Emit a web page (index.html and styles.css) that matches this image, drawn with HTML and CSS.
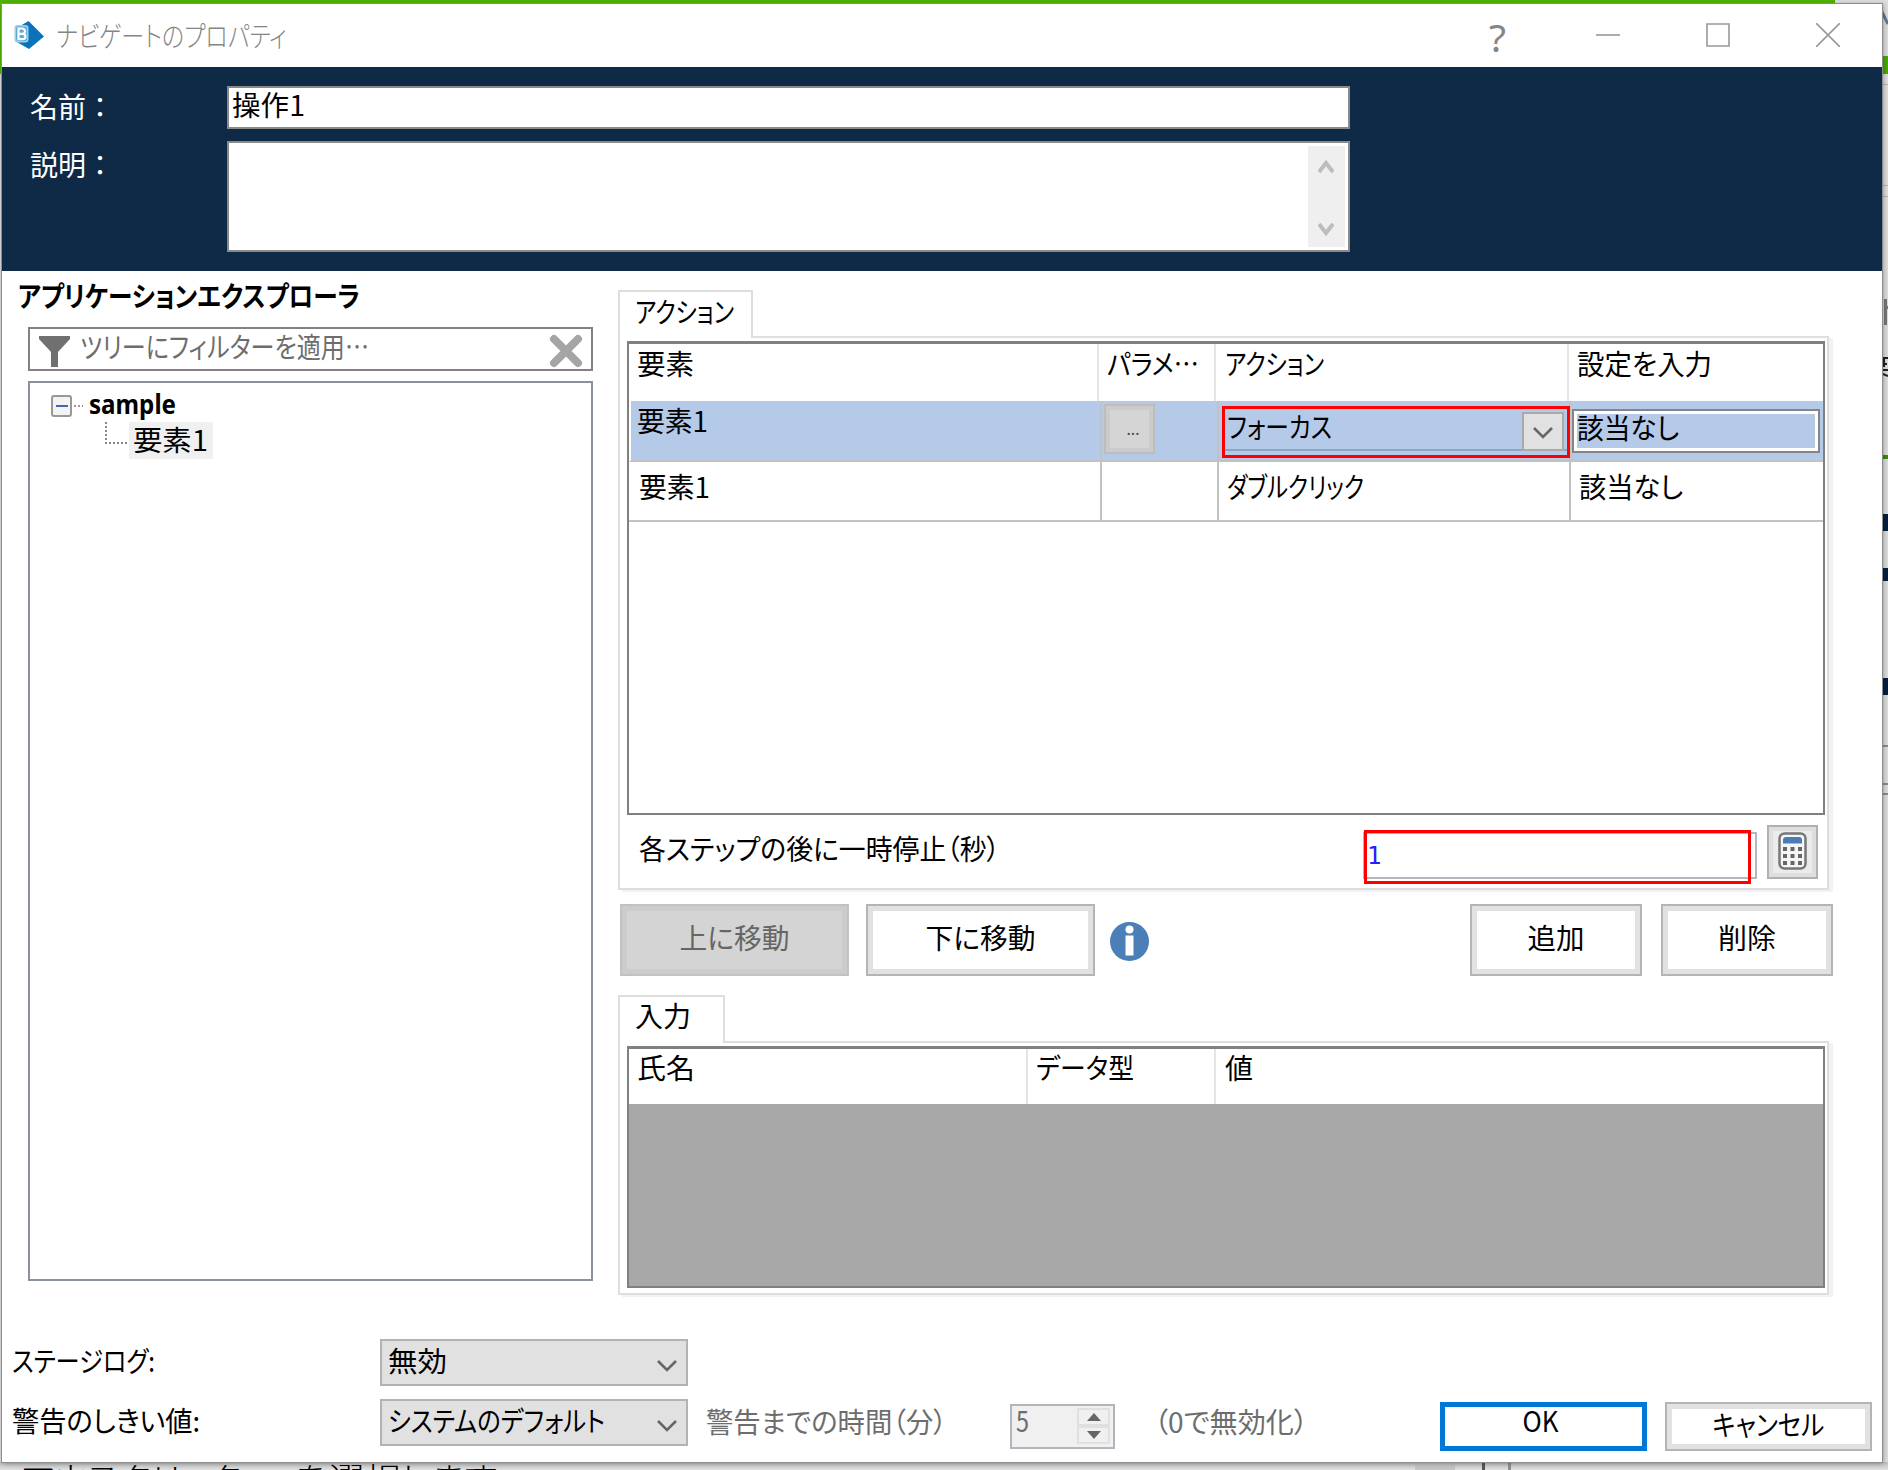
FILE: index.html
```html
<!DOCTYPE html>
<html lang="ja">
  <head>
    <meta charset="UTF-8" />
    <title>ナビゲートのプロパティ</title>
    <link rel="stylesheet" href="styles.css">
  </head>
  <body>
    <!-- what shows of the page behind the dialog -->
    <div class="backdrop">
      <div class="green-top"></div>
      <svg class="behind-right" width="6" height="1470" viewBox="0 0 6 1470">
        <path d="M0 12l6 12" stroke="#60758f" stroke-width="3" />
        <path fill="#4aa800" d="M0 56h6v18H0z" />
        <path fill="#b5b5b5" d="M0 84h6v1H0zM0 185h6v1H0zM0 196h6v1H0z" />
        <path fill="#777" d="M2 299h3v26H2zM3 306h3v3H3z" />
        <path stroke="#222" stroke-width="2" d="M0 358h6M0 364h5M0 370h6M2 357v10M1 374l5 2" />
        <path fill="#3b8a0a" d="M0 455h6v4H0z" />
        <path fill="#04203f" d="M0 514h6v17H0zM0 568h6v13H0zM0 678h6v17H0z" />
        <path fill="#8b8b8b" d="M0 745h6v2H0zM0 783h6v2H0zM0 793h6v2H0z" />
      </svg>
      <div class="behind-bottom">
        <span class="fit" data-w="475">マウスクリック　」を選択します</span>
        <i class="block"></i><i class="bar"></i><i class="bar light"></i>
      </div>
    </div>

    <div class="window">
      <div class="titlebar">
        <svg class="logo" width="30" height="28" viewBox="0 0 30 28">
          <path fill="#0a72b8" d="M14.500 0L30 15.500 15 28 1 20V8z" />
          <rect x="0.500" y="4" width="14" height="17.500" rx="3" fill="#9fcdeb" />
          <rect x="2" y="5.500" width="11" height="14.500" rx="2" fill="#5badd9" />
          <path fill="none" stroke="#fff" stroke-width="2.200" d="M4.500 7.500H8q3 0 3 2.700t-3 2.600H4.500zM4.500 12.800h4q3 0 3 2.700t-3 2.700h-4z" />
        </svg>
        <span class="title fit" data-w="231">ナビゲートのプロパティ</span>
        <div class="controls">
          <span class="help fit" data-w="17">?</span>
          <svg width="24" height="24" viewBox="0 0 24 24"><path d="M0 12h24" /></svg>
          <svg width="24" height="24" viewBox="0 0 24 24"><path d="M1 1h22v22H1z" /></svg>
          <svg width="24" height="24" viewBox="0 0 24 24"><path d="M0 0l24 24M24 0L0 24" /></svg>
        </div>
      </div>

      <div class="header">
        <span class="label"><span class="fit" data-w="84">名前：</span></span>
        <div class="field"><span class="fit" data-w="73">操作1</span></div>
        <span class="label desc"><span class="fit" data-w="84">説明：</span></span>
        <div class="field area">
          <div class="scroll">
            <svg width="16" height="15" viewBox="0 0 16 15"><path d="M1 13l7-9 7 9" /></svg>
            <svg width="16" height="15" viewBox="0 0 16 15"><path d="M1 2l7 9 7-9" /></svg>
          </div>
        </div>
      </div>

      <div class="main">
        <div class="explorer">
          <h2><span class="fit" data-w="342">アプリケーションエクスプローラ</span></h2>
          <div class="filter">
            <svg width="31" height="31" viewBox="0 0 31 31"><path fill="#707070" d="M0 0h31v3L19 16v15h-7V16L0 3z" /></svg>
            <span class="fit" data-w="289">ツリーにフィルターを適用…</span>
            <svg class="clear" width="34" height="34" viewBox="0 0 34 34"><path d="M5 5l24 24M29 5L5 29" /></svg>
          </div>
          <div class="tree">
            <div class="node">
              <svg width="32" height="22" viewBox="0 0 32 22">
                <rect x="1" y="1" width="19" height="20" rx="2" fill="#f3f3f3" stroke="#989898" stroke-width="2" />
                <path stroke="#4a62b5" stroke-width="2" d="M5 11h12" />
                <path stroke="#999" stroke-width="2" stroke-dasharray="2 2" d="M23 11h9" />
              </svg>
              <b class="fit" data-w="87">sample</b>
            </div>
            <div class="node child">
              <svg width="22" height="24" viewBox="0 0 22 24">
                <path fill="none" stroke="#888" stroke-width="2" stroke-dasharray="2 2" d="M1 0v21h21" />
              </svg>
              <span class="selected"><span class="fit" data-w="75">要素1</span></span>
            </div>
          </div>
        </div>

        <div class="detail">
          <div class="tab"><span class="fit" data-w="99">アクション</span></div>
          <div class="panel actions">
            <div class="grid">
              <div class="row head">
                <div><span class="fit" data-w="57">要素</span></div>
                <div><span class="fit" data-w="92">パラメ…</span></div>
                <div><span class="fit" data-w="99">アクション</span></div>
                <div><span class="fit" data-w="135">設定を入力</span></div>
              </div>
              <div class="row current">
                <div><span class="fit" data-w="71">要素1</span></div>
                <div class="more"><button>...</button></div>
                <div class="combo-cell">
                  <div class="combo">
                    <span class="fit" data-w="105">フォーカス</span>
                    <span class="drop"><svg width="22" height="15" viewBox="0 0 22 15"><path d="M2 2l9 9 9-9" /></svg></span>
                  </div>
                </div>
                <div class="edit-cell"><div class="edit"><span class="fit" data-w="102">該当なし</span></div></div>
              </div>
              <div class="row">
                <div><span class="fit" data-w="71">要素1</span></div>
                <div></div>
                <div><span class="fit" data-w="137">ダブルクリック</span></div>
                <div><span class="fit" data-w="104">該当なし</span></div>
              </div>
            </div>
            <div class="pause">
              <span class="fit" data-w="361">各ステップの後に一時停止（秒）</span>
              <div class="pause-input"><span>1</span></div>
              <button class="calc">
                <svg width="29" height="38" viewBox="0 0 29 38">
                  <rect x="1.500" y="1.500" width="26" height="35" rx="5" fill="#f6f6f6" stroke="#777" stroke-width="2.500" />
                  <path fill="#4a7db5" d="M5 11.500V8q0-3 3-3h13q3 0 3 3v3.500z" />
                  <path stroke="#666" stroke-width="4" stroke-dasharray="4 3.500" d="M5 17h19M5 24h19M5 31h19" />
                </svg>
              </button>
            </div>
          </div>

          <div class="buttons">
            <button class="btn wide disabled"><span class="fit center" data-w="110">上に移動</span></button>
            <button class="btn wide"><span class="fit center" data-w="110">下に移動</span></button>
            <svg width="39" height="39" viewBox="0 0 39 39">
              <circle cx="19.500" cy="19.500" r="19.500" fill="#4a7fb8" />
              <circle cx="19.500" cy="7.500" r="4" fill="#fff" />
              <path fill="#fff" d="M15.500 13.500h8v20h-8z" />
            </svg>
            <button class="btn add"><span class="fit center" data-w="57">追加</span></button>
            <button class="btn"><span class="fit center" data-w="58">削除</span></button>
          </div>

          <div class="tab small"><span class="fit" data-w="56">入力</span></div>
          <div class="panel inputs">
            <div class="grid gray">
              <div class="row head">
                <div><span class="fit" data-w="58">氏名</span></div>
                <div><span class="fit" data-w="98">データ型</span></div>
                <div><span class="fit" data-w="28">値</span></div>
              </div>
            </div>
          </div>
        </div>
      </div>

      <div class="footer">
        <div class="line">
          <span class="name"><span class="fit" data-w="143">ステージログ:</span></span>
          <div class="select">
            <span class="fit" data-w="59">無効</span>
            <svg width="22" height="15" viewBox="0 0 22 15"><path d="M2 2l9 9 9-9" /></svg>
          </div>
        </div>
        <div class="line">
          <span class="name"><span class="fit" data-w="188">警告のしきい値:</span></span>
          <div class="select">
            <span class="fit" data-w="217">システムのデフォルト</span>
            <svg width="22" height="15" viewBox="0 0 22 15"><path d="M2 2l9 9 9-9" /></svg>
          </div>
          <span class="time"><span class="fit" data-w="241">警告までの時間（分）</span></span>
          <div class="spinner">
            <span class="fit" data-w="13">5</span>
            <div class="arrows">
              <i><svg width="14" height="8" viewBox="0 0 14 8"><path d="M0 8l7-8 7 8z" /></svg></i>
              <i><svg width="14" height="8" viewBox="0 0 14 8"><path d="M0 0l7 8 7-8z" /></svg></i>
            </div>
          </div>
          <span class="hint"><span class="fit" data-w="154">（0で無効化）</span></span>
          <button class="btn ok"><span class="fit center" data-w="36">OK</span></button>
          <button class="btn cancel"><span class="fit center" data-w="112">キャンセル</span></button>
        </div>
      </div>
    </div>

    <script src="fit.js"></script>
  </body>
</html>
```
FILE: styles.css
```css
*,
*::after {
  box-sizing: border-box;
}

body {
  margin: 0;
  width: 1888px;
  height: 1470px;
  overflow: hidden;
  position: relative;
  background: #dcdcdc;
  color: #000;
  font: 28px/28px "Noto Sans CJK JP", sans-serif;
  font-feature-settings: "palt";
}

svg {
  display: block;
  flex: none;
}

button {
  font: inherit;
  color: inherit;
  font-feature-settings: inherit;
  padding: 0;
}

.fit {
  display: inline-block;
  white-space: nowrap;
  transform-origin: 0 50%;
}

.fit.center {
  transform-origin: 50% 50%;
}

/* backdrop */
.backdrop {
  position: absolute;
  inset: 0;
  overflow: hidden;
}

.green-top {
  width: 1835px;
  height: 74px;
  background: #4fb300;
}

.behind-right {
  position: absolute;
  top: 0;
  right: 0;
}

.behind-bottom {
  position: absolute;
  left: 0;
  top: 1462px;
  width: 100%;
  height: 8px;
  padding-left: 22px;
  display: flex;
  overflow: hidden;
  background: linear-gradient(#bdbdbd, #e0e0e0);
}

.behind-bottom .fit {
  width: 1393px;
  font-weight: 300;
}

.block {
  width: 40px;
  background: #c4c4c4;
}

.bar {
  width: 3px;
  margin-left: 27px;
  background: #555;
}

.bar.light {
  margin-left: 23px;
  background: #8a8f96;
}

/* window */
.window {
  position: relative;
  width: 1880px;
  height: 1458px;
  margin: 4px 0 0 2px;
  background: #fff;
  box-shadow: 0 0 0 1px #8d8d8d, 1px 1px 5px rgba(0, 0, 0, 0.4);
}

.titlebar {
  display: flex;
  align-items: flex-start;
  height: 63px;
  padding: 17px 42px 0 12px;
  color: #858585;
}

.title {
  margin: 0 0 0 12px;
  font-weight: 300;
}

.controls {
  display: flex;
  align-items: center;
  gap: 86px;
  margin: 1px 0 0 auto;
  height: 26px;
}

.controls svg {
  fill: none;
  stroke: #999;
  stroke-width: 1.6;
}

.help {
  width: 17px;
  margin-right: 4px;
  padding-top: 4px;
  font: 400 38px/26px "Noto Sans", sans-serif;
}

.header {
  display: grid;
  grid-template-columns: 197px 1123px;
  grid-template-rows: 43px 111px;
  row-gap: 12px;
  height: 204px;
  padding: 19px 0 0 28px;
  background: #0e2a47;
}

.label {
  color: #fff;
  padding-top: 6px;
  font-feature-settings: normal;
}

.label.desc {
  padding-top: 9px;
}

.field {
  border: 2px solid #8a8a8a;
  background: #fff;
  padding: 2px 3px;
}

.area {
  padding: 3px;
}

.scroll {
  display: flex;
  flex-direction: column;
  justify-content: space-between;
  align-items: center;
  width: 37px;
  height: 101px;
  margin-left: auto;
  padding: 13px 1px 10px 0;
  background: #efefef;
}

.scroll svg {
  fill: none;
  stroke: #bdbdbd;
  stroke-width: 4;
}

.main {
  display: flex;
  gap: 25px;
  height: 1024px;
  padding-left: 26px;
}

/* left side */
.explorer {
  width: 565px;
}

h2 {
  height: 56px;
  margin: 0 0 0 -10px;
  padding-top: 10px;
  font-size: 28px;
  font-weight: 700;
  line-height: 28px;
}

.filter {
  display: flex;
  height: 44px;
  padding: 6px 8px 0 9px;
  border: 2px solid #828282;
  color: #6d6d6d;
}

.filter .fit {
  margin: -3px 0 0 10px;
}

.filter svg {
  margin-top: 1px;
}

.filter .clear {
  margin: -1px 0 0 auto;
  stroke: #a5a5a5;
  stroke-width: 8;
  stroke-linecap: round;
}

.tree {
  height: 900px;
  margin-top: 10px;
  padding: 12px 21px;
  border: 2px solid #8b919c;
}

.node {
  display: flex;
  height: 27px;
}

.node b {
  margin: -5px 0 0 6px;
  font: 700 26px/28px "Noto Sans", sans-serif;
}

.node.child {
  height: 37px;
  padding-left: 54px;
}

.selected {
  width: 84px;
  height: 37px;
  margin-left: 2px;
  padding: 3px 4px;
  background: #f0f0f0;
}

/* right side */
.detail {
  width: 1215px;
  padding-top: 19px;
}

.tab {
  position: relative;
  width: 135px;
  height: 48px;
  margin-bottom: -2px;
  padding: 5px 0 0 15px;
  border: 2px solid #dedede;
  border-bottom: 0;
  background: #fff;
}

.tab.small {
  width: 107px;
  padding-top: 4px;
}

.panel {
  margin-right: 4px;
  padding: 3px 0 0 7px;
  border: 2px solid #dedede;
  box-shadow: 4px 2px 0 #f2f2f2;
}

.actions {
  height: 554px;
}

.grid {
  width: 1198px;
  height: 474px;
  border: 3px solid #808080;
  border-width: 3px 2px 2px;
}

.row {
  display: grid;
  grid-template-columns: 473px 117px 352px 1fr;
  height: 60px;
  border-bottom: 2px solid #c2c2c2;
}

.row > div {
  padding: 10px 0 0 10px;
  border-right: 2px solid #c2c2c2;
}

.row > div:nth-child(3) {
  padding-left: 8px;
}

.row > div:last-child {
  padding-left: 8px;
  border-right: 0;
}

.head.row {
  grid-template-columns: 470px 117px 353px 1fr;
  height: 57px;
  border-bottom: 0;
}

.head.row > div {
  padding: 5px 0 0 8px;
  border-color: #e5e5e5;
}

.head.row > div:nth-child(3) {
  padding-left: 9px;
}

.row.current {
  height: 61px;
  background: #b5c9e9;
  border-left: 2px solid #fff;
  grid-template-columns: 471px 117px 352px 1fr;
}

.row.current > div {
  padding: 5px 0 0 6px;
}

.row.current > .more {
  padding: 3px 0 0 2px;
}

.more button {
  display: block;
  width: 51px;
  height: 50px;
  padding-left: 7px;
  border: 2px solid #bdbdbd;
  outline: 4px solid #cbcbcb;
  outline-offset: -6px;
  background: #d5d5d5;
  color: #444;
  font: 16px/40px "Noto Sans", sans-serif;
}

.row.current > .combo-cell {
  padding: 5px 0 0 3px;
}

.combo {
  position: relative;
  display: flex;
  justify-content: space-between;
  width: 348px;
  height: 52px;
  padding: 3px 3px 0 2px;
  border: 3px solid #f00;
  box-shadow: inset 0 -4px 0 #b5c9e9, inset 0 -6px 0 #8aa7c6;
}

.drop {
  display: flex;
  align-items: center;
  justify-content: center;
  width: 42px;
  height: 39px;
  padding-top: 4px;
  border: 2px solid #aaa;
  background: #e1e1e1;
}

.drop svg,
.select svg {
  fill: none;
  stroke: #666;
  stroke-width: 2.6;
}

.row.current > .edit-cell {
  padding: 8px 0 0 1px;
}

.edit {
  width: 248px;
  height: 44px;
  padding: 2px 3px;
  border: 2px solid #858585;
  box-shadow: inset 0 0 0 3px #fff;
}

.pause {
  display: flex;
  padding: 19px 9px 0 12px;
}

.pause-input {
  position: relative;
  width: 394px;
  height: 47px;
  margin: -2px 10px 0 auto;
  padding: 9px 2px;
  border: 2px solid #b5b5bd;
  color: #2020ff;
  font: 24px/26px "DejaVu Sans Mono", monospace;
}

/* red marker round the value */
.pause-input::after {
  content: "";
  position: absolute;
  left: -1px;
  top: -4px;
  width: 387px;
  height: 54px;
  border: 3px solid #f00;
}

.calc {
  display: flex;
  justify-content: center;
  width: 51px;
  height: 54px;
  margin-top: -9px;
  padding-top: 5px;
  border: 2px solid #b0b0b0;
  outline: 4px solid #dedede;
  outline-offset: -6px;
  background: #ebebeb;
}

.buttons {
  display: flex;
  align-items: center;
  height: 72px;
  margin: 14px 0 19px 2px;
}

.btn {
  width: 172px;
  height: 72px;
  border: 2px solid #b4b4b4;
  background: #fff;
  box-shadow: inset 0 0 0 5px #e1e1e1;
}

.btn .fit {
  position: relative;
  top: -3px;
}

.wide {
  width: 229px;
  margin-right: 17px;
}

.buttons svg {
  margin-left: -2px;
  margin-top: 2px;
}

.disabled {
  background: #d4d4d4;
  border-color: #c2c2c2;
  box-shadow: inset 0 0 0 5px #cccccc;
  color: #666;
}

.add {
  margin: 0 19px 0 auto;
}

.inputs {
  height: 254px;
}

.inputs .grid {
  height: 242px;
}

.gray {
  background: #a8a8a8;
}

.gray .head.row {
  grid-template-columns: 399px 188px 1fr;
  height: 55px;
  background: #fff;
}

.gray .head.row > div {
  padding-top: 4px;
}

/* footer */
.footer {
  padding: 44px 0 0 10px;
}

.line {
  display: flex;
  align-items: flex-start;
  height: 60px;
}

.name {
  width: 368px;
  padding-top: 7px;
}

.select {
  display: flex;
  justify-content: space-between;
  width: 308px;
  height: 47px;
  padding: 5px 8px 0 6px;
  border: 2px solid #b3b3b3;
  background: #e1e1e1;
}

.select svg {
  margin-top: 13px;
}

.time {
  width: 322px;
  padding: 8px 0 0 18px;
  color: #6d6d6d;
}

.spinner {
  display: flex;
  justify-content: space-between;
  width: 105px;
  height: 45px;
  margin-top: 5px;
  padding: 2px 3px 2px 4px;
  border: 2px solid #b4b4bc;
  background: #f0f0f0;
  color: #6d6d6d;
}

.spinner .fit {
  margin-top: -2px;
}

.arrows {
  width: 33px;
}

.arrows i {
  display: flex;
  align-items: center;
  justify-content: center;
  height: 18px;
  border: 2px solid #e0e0e0;
}

.arrows path {
  fill: #666;
}

.hint {
  width: 325px;
  padding: 8px 0 0 39px;
  color: #6d6d6d;
}

.ok,
.cancel {
  width: 207px;
  height: 49px;
  margin-top: 3px;
}

.ok {
  border: 5px solid #0078d7;
  box-shadow: none;
}

.btn.ok .fit {
  top: -7px;
  left: -3px;
}

.cancel {
  margin-left: 18px;
}
```
FILE: fit.js
```js
// squeeze each label to the width of the dialog's narrow UI font
document.querySelectorAll(".fit").forEach((el) => {
  const range = document.createRange();
  range.selectNodeContents(el);
  const natural = range.getBoundingClientRect().width;
  el.style.transform = `scaleX(${el.dataset.w / natural})`;
});
```
